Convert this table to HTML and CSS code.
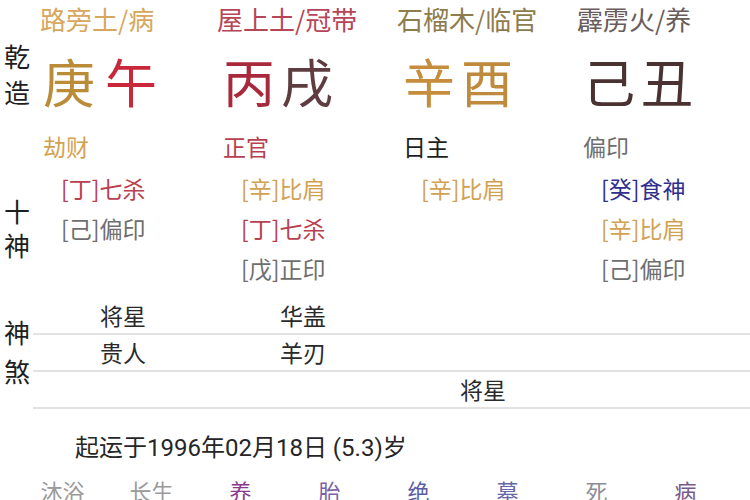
FILE: index.html
```html
<!DOCTYPE html>
<html lang="zh-CN">
<head>
<meta charset="utf-8">
<title>八字排盘</title>
<link rel="stylesheet" href="styles.css">
</head>
<body>
<div class="page">
  <div class="row nayin">
    <div class="label"></div>
    <div class="cell ny ny1">路旁土/病</div>
    <div class="cell ny ny2">屋上土/冠带</div>
    <div class="cell ny ny3">石榴木/临官</div>
    <div class="cell ny ny4">霹雳火/养</div>
  </div>

  <div class="row pillars">
    <div class="label lbl-qz"><span>乾</span><span>造</span></div>
    <div class="cell gz"><span class="gan-geng">庚</span><span class="zhi-wu">午</span></div>
    <div class="cell gz"><span class="gan-bing">丙</span><span class="zhi-xu">戌</span></div>
    <div class="cell gz"><span class="gan-xin">辛</span><span class="zhi-you">酉</span></div>
    <div class="cell gz"><span class="gan-ji">己</span><span class="zhi-chou">丑</span></div>
  </div>

  <div class="row shishen">
    <div class="label lbl-ss"><span>十</span><span>神</span></div>
    <div class="cell">
      <div class="main t-gold">劫财</div>
      <div class="hid t-red">[丁]七杀</div>
      <div class="hid t-grey">[己]偏印</div>
    </div>
    <div class="cell">
      <div class="main t-red">正官</div>
      <div class="hid t-gold">[辛]比肩</div>
      <div class="hid t-red">[丁]七杀</div>
      <div class="hid t-grey">[戊]正印</div>
    </div>
    <div class="cell">
      <div class="main t-black">日主</div>
      <div class="hid t-gold">[辛]比肩</div>
    </div>
    <div class="cell">
      <div class="main t-grey">偏印</div>
      <div class="hid t-blue">[癸]食神</div>
      <div class="hid t-gold">[辛]比肩</div>
      <div class="hid t-grey">[己]偏印</div>
    </div>
  </div>

  <div class="row shensha">
    <div class="label lbl-sha"><span>神</span><span>煞</span></div>
    <div class="sha-table">
      <div class="sha-row first"><span>将星</span><span>华盖</span><span></span><span></span></div>
      <div class="sha-row"><span>贵人</span><span>羊刃</span><span></span><span></span></div>
      <div class="sha-row"><span></span><span></span><span>将星</span><span></span></div>
    </div>
  </div>

  <div class="qiyun">起运于1996年02月18日 (5.3)岁</div>

  <div class="stages">
    <span class="s-grey">沐浴</span>
    <span class="s-grey">长生</span>
    <span class="s-purple">养</span>
    <span class="s-violet">胎</span>
    <span class="s-blue">绝</span>
    <span class="s-blue2">墓</span>
    <span class="s-grey2">死</span>
    <span class="s-violet2">病</span>
  </div>
</div>
</body>
</html>
```

FILE: styles.css
```css
html, body {
  margin: 0;
  padding: 0;
  background: #ffffff;
}

body {
  font-family: "Noto Sans CJK SC", "Noto Sans", sans-serif;
  color: #222222;
}

.page {
  width: 750px;
  height: 500px;
  overflow: hidden;
}

.row {
  display: flex;
}

.label {
  width: 33px;
  flex: none;
  box-sizing: border-box;
  padding-left: 4px;
  display: flex;
  flex-direction: column;
  font-size: 26px;
  color: #1e1e1e;
}

.cell {
  width: 180px;
  flex: none;
  box-sizing: border-box;
}

/* 纳音 row */
.nayin {
  height: 38px;
}

.ny {
  font-size: 26px;
  line-height: 38px;
  padding-left: 4px;
  white-space: nowrap;
}

.ny1 { color: #d6a75c; padding-left: 7px; }
.ny2 { color: #b54658; }
.ny3 { color: #8e7c4c; }
.ny4 { color: #6a5c5c; }

/* 干支 row */
.pillars {
  height: 86px;
}

.lbl-qz {
  line-height: 36px;
}

.gz {
  display: flex;
  gap: 6px;
  padding-left: 10px;
  font-size: 52px;
  line-height: 86px;
}

.gan-geng { color: #bb8c38; margin-right: 4px; }
.zhi-wu { color: #c8283a; }
.gan-bing { color: #a8283c; }
.zhi-xu { color: #5e3c40; }
.gan-xin { color: #c58d3c; }
.zhi-you { color: #bf8a3e; }
.gan-ji { color: #4a3232; }
.zhi-chou { color: #4a3232; }

/* 十神 */
.shishen {
  height: 164px;
}

.lbl-ss {
  padding-top: 70px;
  line-height: 34px;
}

.main {
  font-size: 23px;
  line-height: 44px;
  padding-left: 10px;
}

.hid {
  font-size: 23px;
  line-height: 40px;
  padding-left: 28px;
}

.t-gold { color: #d3a152; }
.t-red { color: #b9404f; }
.t-grey { color: #6e6e6e; }
.t-black { color: #1e1e1e; }
.t-blue { color: #2f2f8e; }

/* 神煞 */
.lbl-sha {
  padding-top: 24px;
  line-height: 39px;
}

.sha-table {
  flex: 1;
  min-width: 0;
}

.sha-row {
  display: grid;
  grid-template-columns: repeat(4, 180px);
  border-bottom: 2px solid #e2e2e2;
  font-size: 23px;
  line-height: 35px;
  color: #2a2a2a;
  text-align: center;
}

.sha-row.first {
  padding-top: 10px;
}

/* 起运 */
.qiyun {
  padding-top: 22px;
  padding-left: 75px;
  font-family: Roboto, "Noto Sans CJK SC", sans-serif;
  font-size: 24px;
  line-height: 34px;
  color: #262626;
}

/* 十二长生 */
.stages {
  display: grid;
  grid-template-columns: repeat(8, 89px);
  padding-left: 18px;
  padding-top: 8px;
  font-size: 22px;
  line-height: 34px;
  text-align: center;
}

.s-grey { color: #9a9a9a; }
.s-grey2 { color: #8c8c96; }
.s-purple { color: #8a3a8e; }
.s-violet { color: #7a62a4; }
.s-violet2 { color: #7a5a8c; }
.s-blue { color: #5c5ca6; }
.s-blue2 { color: #6666aa; }
```
